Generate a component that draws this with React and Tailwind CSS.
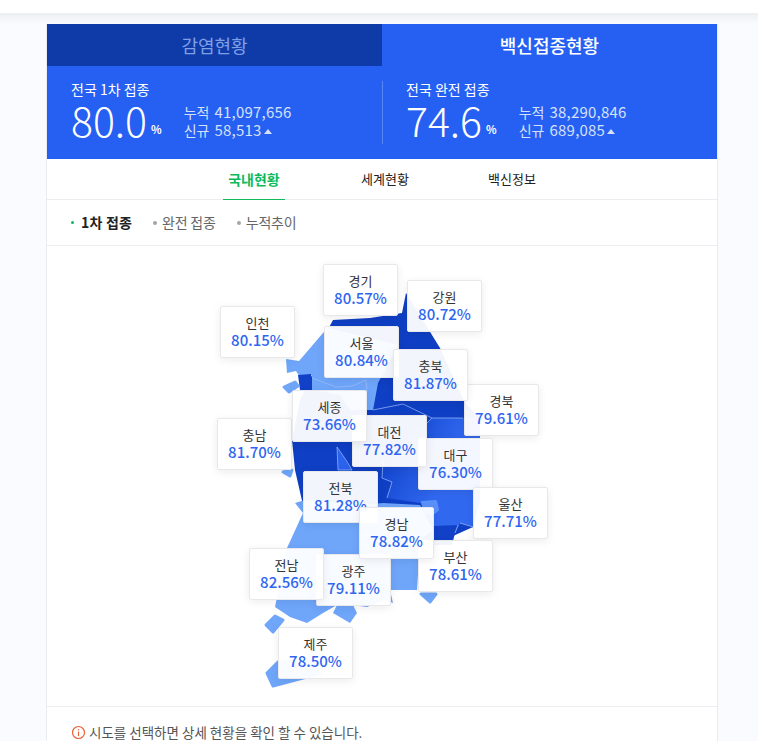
const labels = [
  ["경기", "80.57%", 323, 264],
  ["강원", "80.72%", 407, 280],
  ["인천", "80.15%", 220, 306],
  ["서울", "80.84%", 324, 326],
  ["경북", "79.61%", 464, 384],
  ["충북", "81.87%", 393, 349],
  ["충남", "81.70%", 217, 418],
  ["대구", "76.30%", 418, 438],
  ["대전", "77.82%", 352, 415],
  ["세종", "73.66%", 292, 390],
  ["울산", "77.71%", 473, 487],
  ["전북", "81.28%", 303, 471],
  ["부산", "78.61%", 418, 540],
  ["광주", "79.11%", 316, 554],
  ["경남", "78.82%", 359, 507],
  ["전남", "82.56%", 249, 548],
  ["제주", "78.50%", 278, 627],
];

const MAP_TOP = 246;
const MAP_LEFT = 47;
const LIGHT = "#6fa6fa";

function KoreaMap() {
  const round = { stroke: LIGHT, strokeWidth: 3, strokeLinejoin: "round", fill: LIGHT };
  return (
    <svg
      className="absolute left-0 top-0"
      width="670"
      height="460"
      viewBox={`${MAP_LEFT} ${MAP_TOP} 670 460`}
    >
      <defs>
        <linearGradient id="mid" gradientUnits="userSpaceOnUse" x1="385" y1="470" x2="435" y2="495">
          <stop offset="0" stopColor="#1548d0" />
          <stop offset="1" stopColor="#3168f0" />
        </linearGradient>
      </defs>
      <path d="M333 320L370 318L402 313L406 293L440 348L465 403L480 418L480 500L473 527L433 545L395 540L340 520L303 505L295 470L292 440L300 400L312 375L325 335Z" fill="#0f3fc4" />
      <path d="M432 418L480 418L480 500L473 527L460 523L455 533L433 530L433 505L420 503L387 498L392 482L382 478L383 460L425 425Z" fill="url(#mid)" />
      <path d="M434 526L458 525L455 533L452 545L433 545Z" fill="#1241c8" />
      <path d="M422 502L436 501L438 510L433 514L424 512Z" fill="#5a90f8" stroke="#5a90f8" strokeWidth="2" strokeLinejoin="round" />
      <path d="M373 410L403 404L432 418L463 418M432 418L425 425M383 460L382 478L392 482L387 498M458 525L455 533M460 523L473 527" fill="none" stroke="#8fb0f5" strokeWidth="0.8" />
      <path d="M323 333L328 328L398 345L378 383L373 410L350 410L340 395L312 390L312 375L300 377L296 371L287 373L286 359L299 361Z" fill={LIGHT} />
      <path d="M298 375L311 374L312 390L300 390Z" fill="#1241c8" />
      <path d="M284 387L295 382L298 386L289 392Z" {...round} />
      <path d="M312 378L336 387L352 386L366 380L367 392L350 400L340 395" fill="none" stroke="#9dbdf5" strokeWidth="0.7" />
      <path d="M337 447L346 460L352 470L338 470Z" fill="#2b62ee" stroke="#9dbdf5" strokeWidth="0.7" />
      <path d="M283 472L292 470L290 476Z" {...round} />
      <path d="M295 503L303 513L287 548L275 607L290 617L307 623L323 613L337 605L333 613L350 623L357 613L353 605L367 607L385 600L393 603L390 590L417 590L419 558L420 540L433 530L420 505L383 503L360 505L305 500Z" fill={LIGHT} />
      <path d="M266 625L275 616L283 620L273 632Z" {...round} />
      <path d="M267 673L278 662L310 660L320 674L303 678L273 686Z" {...round} />
      <path d="M421 594L436 594L430 602Z" {...round} />
    </svg>
  );
}

function Stat({ title, pct, total, fresh, className }) {
  return (
    <div className={className}>
      <div className="text-[14px] leading-[18px] text-white">{title}</div>
      <div className="-mt-[1px] flex items-end">
        <span className="text-[41px] leading-[44px] font-light text-white">{pct}</span>
        <span className="mb-[6px] ml-[4px] text-[11px] leading-[12px] font-bold text-white">%</span>
        <div className="mb-[2px] ml-[22px] text-[14px] leading-[18px] text-[#d5e0fb]">
          <div>
            누적 <span className="ml-[2px] text-[15px] tracking-[0.2px]">{total}</span>
          </div>
          <div className="flex items-center">
            <span>신규&nbsp;</span>
            <span className="ml-[2px] text-[15px] tracking-[0.2px]">{fresh}</span>
            <span className="ml-[2px] mt-[2px] h-0 w-0 border-x-[4px] border-b-[5px] border-x-transparent border-b-[#d5e0fb]" />
          </div>
        </div>
      </div>
    </div>
  );
}

function SubTab({ children, active, className }) {
  return (
    <div className={`flex items-center ${className}`}>
      <span className={active ? "h-[3px] w-[3px] rounded-full bg-[#0fba5c]" : "h-[4px] w-[4px] rounded-full bg-[#a5a5a5]"} />
      <span className={active ? "ml-[7px] font-bold tracking-[0.2px] text-[#222]" : "ml-[5px] tracking-[-0.2px] text-[#666]"}>{children}</span>
    </div>
  );
}

export default function App() {
  return (
    <div
      className="h-[741px] overflow-hidden bg-[#f9fbfe] text-[#222]"
      style={{ fontFamily: '"Noto Sans CJK KR", "Noto Sans", sans-serif' }}
    >
      <div className="h-[13px] bg-white" />
      <div className="h-[11px] bg-gradient-to-b from-[#eceef0] to-[#f9fbfe]" />
      <div className="ml-[46px] h-[800px] w-[672px] border-x border-[#e8ebf0] bg-white">
        <div className="flex h-[42px] text-[18px]">
          <div className="flex w-[335px] items-center justify-center bg-[#0f3ba8] text-[#7f9fe6]">감염현황</div>
          <div className="flex flex-1 items-center justify-center bg-[#2660f2] font-medium text-white">백신접종현황</div>
        </div>
        <div className="flex h-[93px] bg-[#2660f2] pl-[24px] pt-[14px]">
          <Stat className="w-[311px]" title="전국 1차 접종" pct="80.0" total="41,097,656" fresh="58,513" />
          <div className="mr-[23px] mb-[15px] mt-[1px] w-px bg-[#5a86f5]" />
          <Stat className="flex-1" title="전국 완전 접종" pct="74.6" total="38,290,846" fresh="689,085" />
        </div>
        <div className="flex h-[41px] border-b border-[#ebedf0] pl-[176px] text-[13px]">
          <div className="-mb-px flex w-[62px] items-center justify-center border-b border-[#0fba5c] text-[14px] font-bold text-[#0fba5c]">국내현황</div>
          <div className="ml-[75px] flex w-[50px] items-center justify-center">세계현황</div>
          <div className="ml-[77px] flex w-[50px] items-center justify-center">백신정보</div>
        </div>
        <div className="flex h-[46px] items-center border-b border-[#ebedf0] pl-[24px] text-[14px]">
          <SubTab active>1차 접종</SubTab>
          <SubTab className="ml-[21px]">완전 접종</SubTab>
          <SubTab className="ml-[21px]">누적추이</SubTab>
        </div>
        <div className="relative h-[461px] border-b border-[#ebedf0]">
          <KoreaMap />
          {labels.map(([name, value, x, y]) => (
            <div
              key={name}
              className="absolute flex h-[52px] w-[75px] flex-col items-center justify-center rounded-[2px] border border-[#e8e8ea] bg-white/95 pb-[2px] shadow-[0_2px_8px_rgba(0,0,0,0.08)]"
              style={{ left: x - MAP_LEFT, top: y - MAP_TOP }}
            >
              <span className="text-[13px] leading-[17px] text-[#333]">{name}</span>
              <span className="text-[15px] leading-[17px] font-medium text-[#2f66f0]">{value}</span>
            </div>
          ))}
        </div>
        <div className="flex items-center pl-[24px] pt-[16px] text-[13.5px] leading-[18px] text-[#555]">
          <svg width="15" height="15" viewBox="0 0 15 15" className="mr-[3px]">
            <circle cx="7.5" cy="7.5" r="6" fill="none" stroke="#e8623a" strokeWidth="1.2" />
            <path d="M7.5 6.5V11M7.5 4V5.3" stroke="#e8623a" strokeWidth="1.2" />
          </svg>
          시도를 선택하면 상세 현황을 확인 할 수 있습니다.
        </div>
      </div>
    </div>
  );
}
